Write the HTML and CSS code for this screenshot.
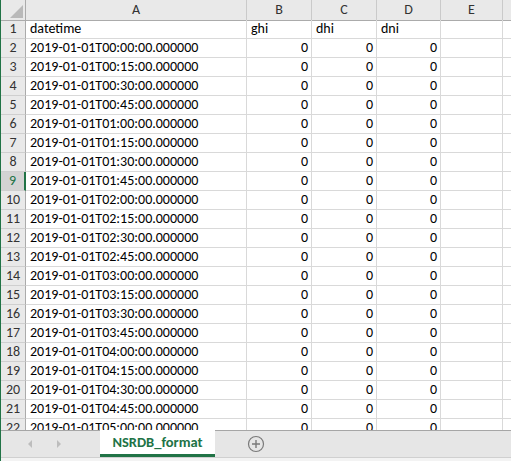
FILE: index.html
```html
<!DOCTYPE html>
<html>
<head>
<meta charset="utf-8">
<link rel="stylesheet" href="styles.css">
</head>
<body>
<div class="window">
  <div class="sheet">
    <div class="row head">
      <div class="corner"><span class="tri"></span></div>
      <div class="ch">A</div><div class="ch">B</div><div class="ch">C</div><div class="ch">D</div><div class="ch">E</div><div class="ch"></div>
    </div>
    <div class="row"><div class="rh">1</div><div class="c">datetime</div><div class="c">ghi</div><div class="c">dhi</div><div class="c">dni</div><div class="c"></div><div class="c"></div></div>
    <div class="row"><div class="rh">2</div><div class="c">2019-01-01T00:00:00.000000</div><div class="c n">0</div><div class="c n">0</div><div class="c n">0</div><div class="c"></div><div class="c"></div></div>
    <div class="row"><div class="rh">3</div><div class="c">2019-01-01T00:15:00.000000</div><div class="c n">0</div><div class="c n">0</div><div class="c n">0</div><div class="c"></div><div class="c"></div></div>
    <div class="row"><div class="rh">4</div><div class="c">2019-01-01T00:30:00.000000</div><div class="c n">0</div><div class="c n">0</div><div class="c n">0</div><div class="c"></div><div class="c"></div></div>
    <div class="row"><div class="rh">5</div><div class="c">2019-01-01T00:45:00.000000</div><div class="c n">0</div><div class="c n">0</div><div class="c n">0</div><div class="c"></div><div class="c"></div></div>
    <div class="row"><div class="rh">6</div><div class="c">2019-01-01T01:00:00.000000</div><div class="c n">0</div><div class="c n">0</div><div class="c n">0</div><div class="c"></div><div class="c"></div></div>
    <div class="row"><div class="rh">7</div><div class="c">2019-01-01T01:15:00.000000</div><div class="c n">0</div><div class="c n">0</div><div class="c n">0</div><div class="c"></div><div class="c"></div></div>
    <div class="row"><div class="rh">8</div><div class="c">2019-01-01T01:30:00.000000</div><div class="c n">0</div><div class="c n">0</div><div class="c n">0</div><div class="c"></div><div class="c"></div></div>
    <div class="row"><div class="rh sel">9</div><div class="c">2019-01-01T01:45:00.000000</div><div class="c n">0</div><div class="c n">0</div><div class="c n">0</div><div class="c"></div><div class="c"></div></div>
    <div class="row"><div class="rh">10</div><div class="c">2019-01-01T02:00:00.000000</div><div class="c n">0</div><div class="c n">0</div><div class="c n">0</div><div class="c"></div><div class="c"></div></div>
    <div class="row"><div class="rh">11</div><div class="c">2019-01-01T02:15:00.000000</div><div class="c n">0</div><div class="c n">0</div><div class="c n">0</div><div class="c"></div><div class="c"></div></div>
    <div class="row"><div class="rh">12</div><div class="c">2019-01-01T02:30:00.000000</div><div class="c n">0</div><div class="c n">0</div><div class="c n">0</div><div class="c"></div><div class="c"></div></div>
    <div class="row"><div class="rh">13</div><div class="c">2019-01-01T02:45:00.000000</div><div class="c n">0</div><div class="c n">0</div><div class="c n">0</div><div class="c"></div><div class="c"></div></div>
    <div class="row"><div class="rh">14</div><div class="c">2019-01-01T03:00:00.000000</div><div class="c n">0</div><div class="c n">0</div><div class="c n">0</div><div class="c"></div><div class="c"></div></div>
    <div class="row"><div class="rh">15</div><div class="c">2019-01-01T03:15:00.000000</div><div class="c n">0</div><div class="c n">0</div><div class="c n">0</div><div class="c"></div><div class="c"></div></div>
    <div class="row"><div class="rh">16</div><div class="c">2019-01-01T03:30:00.000000</div><div class="c n">0</div><div class="c n">0</div><div class="c n">0</div><div class="c"></div><div class="c"></div></div>
    <div class="row"><div class="rh">17</div><div class="c">2019-01-01T03:45:00.000000</div><div class="c n">0</div><div class="c n">0</div><div class="c n">0</div><div class="c"></div><div class="c"></div></div>
    <div class="row"><div class="rh">18</div><div class="c">2019-01-01T04:00:00.000000</div><div class="c n">0</div><div class="c n">0</div><div class="c n">0</div><div class="c"></div><div class="c"></div></div>
    <div class="row"><div class="rh">19</div><div class="c">2019-01-01T04:15:00.000000</div><div class="c n">0</div><div class="c n">0</div><div class="c n">0</div><div class="c"></div><div class="c"></div></div>
    <div class="row"><div class="rh">20</div><div class="c">2019-01-01T04:30:00.000000</div><div class="c n">0</div><div class="c n">0</div><div class="c n">0</div><div class="c"></div><div class="c"></div></div>
    <div class="row"><div class="rh">21</div><div class="c">2019-01-01T04:45:00.000000</div><div class="c n">0</div><div class="c n">0</div><div class="c n">0</div><div class="c"></div><div class="c"></div></div>
    <div class="row"><div class="rh">22</div><div class="c">2019-01-01T05:00:00.000000</div><div class="c n">0</div><div class="c n">0</div><div class="c n">0</div><div class="c"></div><div class="c"></div></div>
  </div>
  <div class="tabbar">
    <div class="navs">
      <svg class="arrow" width="8" height="10" viewBox="0 0 8 10"><path d="M6 1 L2 5 L6 9 Z" fill="#bdbdbd"/></svg>
      <svg class="arrow" width="8" height="10" viewBox="0 0 8 10"><path d="M2 1 L6 5 L2 9 Z" fill="#bdbdbd"/></svg>
    </div>
    <div class="tab">NSRDB_format</div>
    <div class="add">
      <svg width="18" height="18" viewBox="0 0 18 18"><circle cx="9" cy="9" r="7.5" fill="none" stroke="#7a7a7a" stroke-width="1.2"/><path d="M9 5 V13 M5 9 H13" stroke="#7a7a7a" stroke-width="1.4"/></svg>
    </div>
  </div>
  <div class="bottom"></div>
</div>
</body>
</html>
```
FILE: styles.css
```css
* { box-sizing: border-box; }
html, body { margin: 0; padding: 0; background: #ffffff; }
body { width: 511px; height: 461px; overflow: hidden; }
.window {
  width: 511px;
  height: 461px;
  border-left: 1px solid #217346;
  display: flex;
  flex-direction: column;
  font-family: "Carlito", "Liberation Sans", Arial, sans-serif;
  font-size: 14px;
  color: #000;
}
.sheet { height: 430px; overflow: hidden; flex: none; }
.row {
  display: grid;
  grid-template-columns: 25px 221px 65px 65px 64px 62px 30px;
  height: 19px;
}
.row.head { height: 20px; }
.c {
  border-right: 1px solid #d9d9d9;
  border-bottom: 1px solid #d9d9d9;
  padding: 0 3px 0 4px;
  line-height: 18px;
  white-space: nowrap;
  overflow: hidden;
}
.c.n { text-align: right; }
.rh {
  background: #e9e9e9;
  border-right: 1px solid #ababab;
  border-bottom: 1px solid #cfcfcf;
  color: #333;
  text-align: center;
  line-height: 18px;
}
.rh.sel {
  background: #d3d3d3;
  color: #217346;
  border-right: 2px solid #217346;
}
.ch {
  background: #e9e9e9;
  border-right: 1px solid #cacaca;
  border-bottom: 1px solid #ababab;
  color: #333;
  text-align: center;
  line-height: 20px;
}
.corner {
  background: #e9e9e9;
  border-right: 1px solid #ababab;
  border-bottom: 1px solid #ababab;
  position: relative;
}
.tri {
  position: absolute;
  right: 2px;
  bottom: 2px;
  width: 0;
  height: 0;
  border-left: 13px solid transparent;
  border-bottom: 13px solid #b9b9b9;
}
.tabbar {
  height: 27px;
  flex: none;
  background: #e6e6e6;
  border-top: 1px solid #a6a6a6;
  display: flex;
  align-items: stretch;
}
.navs {
  width: 99px;
  display: flex;
  align-items: center;
  padding-left: 25px;
  gap: 21px;
}
.tab {
  width: 115px;
  background: #ffffff;
  margin-top: -1px;
  color: #217346;
  font-weight: bold;
  font-size: 14.5px;
  text-align: center;
  line-height: 24px;
  border-bottom: 3px solid #217346;
}
.add {
  padding-left: 32px;
  display: flex;
  align-items: center;
}
.bottom { flex: 1; background: #f3f3f3; border-top: 1px solid #d0d0d0; }
```
